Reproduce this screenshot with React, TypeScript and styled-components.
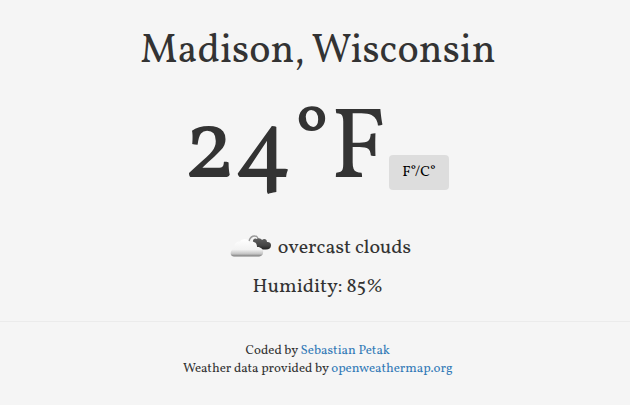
import React from "react";
import styled, { createGlobalStyle } from "styled-components";

const GlobalStyle = createGlobalStyle`
  * { box-sizing: border-box; }
  body {
    margin: 0;
    background: #f5f5f5;
    color: #333;
    font-family: Vollkorn, "Liberation Serif", serif;
  }
`;

const Page = styled.main`
  height: 405px;
  overflow: hidden;
  display: flex;
  flex-direction: column;
  align-items: center;
`;

const City = styled.h1`
  margin: 20px 0 0 6px;
  font-size: 40px;
  font-weight: 400;
  line-height: 64px;
  white-space: nowrap;
`;

const Reading = styled.section`
  display: flex;
  align-items: flex-start;
  justify-content: flex-end;
  width: 264px;
  height: 96px;
  margin: 16px 0 0 4px;
`;

const Temperature = styled.div`
  margin: 4px 2.7px 0 0;
  font-size: 100px;
  line-height: 96px;
  white-space: nowrap;
`;

const Degrees = styled.span`
  margin-right: -0.2px;
`;

const UnitButton = styled.button`
  flex: none;
  width: 60px;
  height: 35px;
  margin-top: 55px;
  padding: 0;
  border: 0;
  border-radius: 4px;
  background: #ddd;
  color: #000;
  font: 15px/20px Vollkorn, "Liberation Serif", serif;
  white-space: nowrap;
`;

const Conditions = styled.div`
  display: flex;
  align-items: center;
  height: 40px;
  margin: 30px 0 0 11px;
`;

const CloudIcon = styled.svg`
  width: 42px;
  height: 24px;
  margin-right: 6px;
`;

const Detail = styled.p`
  margin: 4px 0 0;
  font-size: 20px;
  line-height: 40px;
  white-space: nowrap;
`;

const Humidity = styled(Detail)`
  margin: 1px 0 0 6px;
`;

const Footer = styled.footer`
  width: 100%;
  margin-top: 14px;
  padding: 20px 0 0 5.5px;
  border-top: 1px solid #ebebeb;
  font-size: 13px;
  line-height: 18px;
  text-align: center;
`;

const Link = styled.a`
  color: #337ab7;
  text-decoration: none;
`;

function Clouds() {
  return (
    <CloudIcon viewBox="0 0 42 24" aria-hidden="true">
      <defs>
        <linearGradient id="light" x1="0" y1="0" x2="0" y2="1">
          <stop offset="0" stopColor="#fff" />
          <stop offset="0.6" stopColor="#f2f2f2" />
          <stop offset="0.85" stopColor="#c4c4c4" />
          <stop offset="1" stopColor="#777" />
        </linearGradient>
        <linearGradient id="dark" x1="0" y1="0" x2="0" y2="1">
          <stop offset="0" stopColor="#606060" />
          <stop offset="0.65" stopColor="#444" />
          <stop offset="1" stopColor="#222" />
        </linearGradient>
      </defs>
      <path d="M19 7C20 4 22 1.8 25 2C27 2 28 4 28 5" fill="none" stroke="#999" strokeWidth="1.4" />
      <path d="M23 8C22.5 5 25 3.5 27 5C29 3.5 31 5 32 6C34 4 37 5 37 8C39 7.5 41.3 9 41 11.5C41 14 39 15.5 36 15.5H29C27 11 23 12 23 8Z" fill="url(#dark)" />
      <path d="M4 22.5C1 22.5 0 20 1 17.5C2 15 3 14 5 14C3.5 10 6 7.5 10 7.5C12 4 18 4 19.5 8.5C23 7 27 8 27 13C31 12.5 34 16 33 19C33 21 31 22.5 29 22.5Z" fill="url(#light)" />
    </CloudIcon>
  );
}

export default function App() {
  return (
    <>
      <GlobalStyle />
      <Page>
        <City>Madison, Wisconsin</City>
        <Reading>
          <Temperature>
            <Degrees>24</Degrees>°<span>F</span>
          </Temperature>
          <UnitButton type="button">F°/C°</UnitButton>
        </Reading>
        <Conditions>
          <Clouds />
          <Detail>overcast clouds</Detail>
        </Conditions>
        <Humidity>Humidity: 85%</Humidity>
        <Footer>
          <div>
            Coded by <Link>Sebastian Petak</Link>
          </div>
          <div>
            Weather data provided by <Link>openweathermap.org</Link>
          </div>
        </Footer>
      </Page>
    </>
  );
}
